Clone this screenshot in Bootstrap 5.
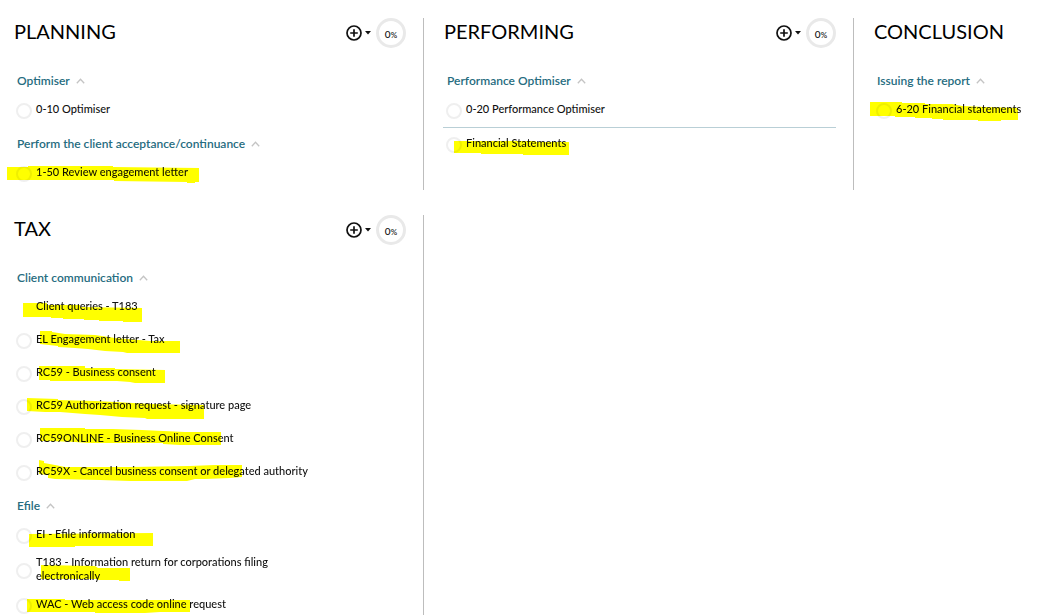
<!DOCTYPE html>
<html lang="en">
<head>
<meta charset="utf-8">
<meta name="viewport" content="width=device-width, initial-scale=1">
<title>Engagement documents</title>
<link href="https://cdn.jsdelivr.net/npm/bootstrap@5.3.0/dist/css/bootstrap.min.css" rel="stylesheet">
<style>
body { font-family: Lato, "Liberation Sans", sans-serif; color: #111; background: #fff; overflow-x: hidden; }
.board { display: grid; grid-template-columns: 424fr 430fr 204fr; row-gap: 25px; padding-top: 18px; }
.phase { padding-left: 19px; padding-right: 17px; border-right: 1px solid #bdbdbd; min-width: 0; }
.phase.first { padding-left: 13px; }
.phase.last { border-right: 0; padding-right: 0; }
.phase.tall { min-height: calc(100vh - 215px); }
.phase-head { height: 30px; margin-bottom: 16px; padding-left: 1px; }
.phase-head h2 { font-size: 20px; line-height: 26px; font-weight: 400; color: #000; margin: 0; padding-bottom: 4px; }
.add-btn { color: #111; line-height: 0; gap: 3px; }
.progress-ring { width: 30px; height: 30px; border: 3px solid #e9e9e9; border-radius: 50%; font-size: 10px; line-height: 12px; font-weight: 500; padding-top: 7px; margin-left: 5px; }
.progress-ring small { font-size: 8px; }
.section-btn { height: 30px; padding: 10px 4px 6px; font-size: 12px; line-height: 14px; font-weight: 600; color: #266c80; white-space: nowrap; }
.section-btn svg { margin-left: -2px; }
.doc { position: relative; isolation: isolate; min-height: 33px; padding: 3px 0 2px 3px; }
.doc + .doc.ruled { border-top: 1px solid #b9cfd6; min-height: 34px; }
.doc a { color: inherit; text-decoration: none; font-size: 11px; line-height: 14px; font-weight: 500; max-width: 280px; padding: 0 0 4px 4px; }
.status { width: 16px; height: 16px; border: 2px solid #efefef; border-radius: 50%; flex: none; }
.marker { position: absolute; left: 0; top: 0; width: 100%; height: 100%; overflow: visible; fill: #ff0; mix-blend-mode: multiply; pointer-events: none; }
</style>
</head>
<body>
<svg width="0" height="0" class="position-absolute" aria-hidden="true">
  <symbol id="plus" viewBox="0 0 16 16"><circle cx="8" cy="8" r="7" fill="none" stroke="currentColor" stroke-width="1.7"/><path d="M8 4.2v7.6M4.2 8h7.6" stroke="currentColor" stroke-width="1.7"/></symbol>
  <symbol id="caret" viewBox="0 0 6 4"><path d="M0 0h6L3 3.5z" fill="currentColor"/></symbol>
  <symbol id="chev" viewBox="0 0 9 6"><path d="M.8 5.2 4.5 1.3l3.7 3.9" fill="none" stroke="#c4c4c4" stroke-width="1.3"/></symbol>
</svg>
<main class="board">
  <section class="phase first">
    <div class="phase-head d-flex align-items-center">
      <h2 class="me-auto">PLANNING</h2>
      <button class="add-btn btn p-0 border-0 d-flex align-items-center" aria-label="Add"><svg width="16" height="16"><use href="#plus"/></svg><svg width="6" height="4"><use href="#caret"/></svg></button>
      <div class="progress-ring text-center">0<small>%</small></div>
    </div>
    <button class="section-btn btn border-0 d-flex align-items-center gap-2">Optimiser<svg width="9" height="6"><use href="#chev"/></svg></button>
    <div class="doc d-flex align-items-center"><span class="status"></span><a href="#">0-10 Optimiser</a></div>
    <button class="section-btn btn border-0 d-flex align-items-center gap-2">Perform the client acceptance/continuance<svg width="9" height="6"><use href="#chev"/></svg></button>
    <div class="doc d-flex align-items-center"><span class="status"></span><a href="#">1-50 Review engagement letter</a>
      <svg class="marker"><path d="M-6 10H15V9H100V10L186 11V25H182V26H174V25L101 24V23H-6z"/></svg></div>
  </section>

  <section class="phase">
    <div class="phase-head d-flex align-items-center">
      <h2 class="me-auto">PERFORMING</h2>
      <button class="add-btn btn p-0 border-0 d-flex align-items-center" aria-label="Add"><svg width="16" height="16"><use href="#plus"/></svg><svg width="6" height="4"><use href="#caret"/></svg></button>
      <div class="progress-ring text-center">0<small>%</small></div>
    </div>
    <button class="section-btn btn border-0 d-flex align-items-center gap-2">Performance Optimiser<svg width="9" height="6"><use href="#chev"/></svg></button>
    <div class="doc d-flex align-items-center"><span class="status"></span><a href="#">0-20 Performance Optimiser</a></div>
    <div class="doc ruled d-flex align-items-center"><span class="status"></span><a href="#">Financial Statements</a>
      <svg class="marker"><path d="M11 13H93V14H126V27H80V26H38V25H11z"/></svg></div>
  </section>

  <section class="phase last">
    <div class="phase-head d-flex align-items-center"><h2>CONCLUSION</h2></div>
    <button class="section-btn btn border-0 d-flex align-items-center gap-2">Issuing the report<svg width="9" height="6"><use href="#chev"/></svg></button>
    <div class="doc d-flex align-items-center"><span class="status"></span><a href="#">6-20 Financial statements</a>
      <svg class="marker"><path d="M-3 8H29V9H52V10H79L89 12L112 13L145 14V26H128V27H105V26H70V25H59V24H42V23H22V22H-3z"/></svg></div>
  </section>

  <section class="phase first tall">
    <div class="phase-head d-flex align-items-center">
      <h2 class="me-auto">TAX</h2>
      <button class="add-btn btn p-0 border-0 d-flex align-items-center" aria-label="Add"><svg width="16" height="16"><use href="#plus"/></svg><svg width="6" height="4"><use href="#caret"/></svg></button>
      <div class="progress-ring text-center">0<small>%</small></div>
    </div>
    <button class="section-btn btn border-0 d-flex align-items-center gap-2">Client communication<svg width="9" height="6"><use href="#chev"/></svg></button>
    <div class="doc d-flex align-items-center"><span class="status invisible"></span><a href="#">Client queries - T183</a>
      <svg class="marker"><path d="M10 12H34V14H67V16L129 17V31H110V30H86V29H71V28H50V27H38V26H10z"/></svg></div>
    <div class="doc d-flex align-items-center"><span class="status"></span><a href="#">EL Engagement letter - Tax</a>
      <svg class="marker"><path d="M27 7H39V8L52 10L82 11L102 14L137 17H167V29H114L110 28L92 27L75 25L62 24L45 23V22L27 20z"/></svg></div>
    <div class="doc d-flex align-items-center"><span class="status"></span><a href="#">RC59 - Business consent</a>
      <svg class="marker"><path d="M26 9H72V11H102V12L152 13V26H122L117 25L104 24H37V23H26z"/></svg></div>
    <div class="doc d-flex align-items-center"><span class="status"></span><a href="#">RC59 Authorization request - signature page</a>
      <svg class="marker"><path d="M14 8L45 9V10L82 11L102 12L137 14L191 15V29H134L132 28L109 27L87 25L72 24L47 22H32L14 21z"/></svg></div>
    <div class="doc d-flex align-items-center"><span class="status"></span><a href="#">RC59ONLINE - Business Online Consent</a>
      <svg class="marker"><path d="M27 5H72V6H100L129 7L172 9H208V22H167L150 21V20H75L62 19L37 18H27z"/></svg></div>
    <div class="doc d-flex align-items-center"><span class="status"></span><a href="#">RC59X - Cancel business consent or delegated authority</a>
      <svg class="marker"><path d="M26 4L31 5V7L42 9L52 11H117L177 10L202 9H229V21L217 22L192 23H182L174 25H117L87 24L42 23L35 22V19L26 18z"/></svg></div>
    <button class="section-btn btn border-0 d-flex align-items-center gap-2">Efile<svg width="9" height="6"><use href="#chev"/></svg></button>
    <div class="doc d-flex align-items-center"><span class="status"></span><a href="#">EI - Efile information</a>
      <svg class="marker"><path d="M16 15L140 14V27H62V28H16z"/></svg></div>
    <div class="doc d-flex align-items-center"><span class="status"></span><a href="#">T183 - Information return for corporations filing electronically</a>
      <svg class="marker"><path d="M28 13L82 14L85 16H117V29H106V28H85V27H28z"/></svg></div>
    <div class="doc d-flex align-items-center"><span class="status"></span><a href="#">WAC - Web access code online request</a>
      <svg class="marker"><path d="M14 10H52V11H177V23H147L132 24H82V23H14z"/></svg></div>
  </section>
</main>
<script src="https://cdn.jsdelivr.net/npm/bootstrap@5.3.0/dist/js/bootstrap.bundle.min.js"></script>
</body>
</html>
